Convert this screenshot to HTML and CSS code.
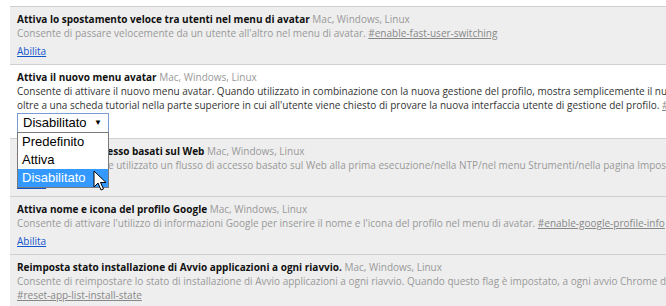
FILE: index.html
```html
<!DOCTYPE html>
<html>
<head>
<title>Flag sperimentali</title>
<meta name=viewport content="width=device-width, initial-scale=1">
<link rel="stylesheet" href="styles.css">
</head>
<body>
<div class="flags">
  <div class="exp off">
    <div class="exp-title"><b>Attiva lo spostamento veloce tra utenti nel menu di avatar</b> <span class="plat">Mac, Windows, Linux</span></div>
    <div class="exp-desc">Consente di passare velocemente da un utente all'altro nel menu di avatar. <a class="perma" href="#">#enable-fast-user-switching</a></div>
    <div class="exp-act"><a class="act" href="#">Abilita</a></div>
  </div>
  <div class="exp on">
    <div class="exp-title"><b>Attiva il nuovo menu avatar</b> <span class="plat">Mac, Windows, Linux</span></div>
    <div class="exp-desc">Consente di attivare il nuovo menu avatar. Quando utilizzato in combinazione con la nuova gestione del profilo, mostra semplicemente il nuovo menu avatar del profilo,<br>oltre a una scheda tutorial nella parte superiore in cui all'utente viene chiesto di provare la nuova interfaccia utente di gestione del profilo. <a class="perma" href="#">#enable-new-avatar-menu</a></div>
    <div class="combo">
      <div class="combo-box"><span>Disabilitato</span><span class="arrow">&#9660;</span></div>
      <div class="combo-list">
        <div class="opt">Predefinito</div>
        <div class="opt">Attiva</div>
        <div class="opt sel">Disabilitato</div>
      </div>
      <svg class="cursor" width="14" height="22" viewBox="0 0 14 22">
        <path d="M1 1 L1 17 L5 13 L8 20 L10.5 19 L7.5 12.5 L13 12.5 Z" fill="#fff" stroke="#000" stroke-width="1" stroke-linejoin="round"/>
      </svg>
    </div>
  </div>
  <div class="exp off">
    <div class="exp-title"><b>Attiva flussi di accesso basati sul Web</b> <span class="plat">Mac, Windows, Linux</span></div>
    <div class="exp-desc">Quando attivo, viene utilizzato un flusso di accesso basato sul Web alla prima esecuzione/nella NTP/nel menu Strumenti/nella pagina Impostazioni. <a class="perma" href="#">#enable-web-based-signin</a></div>
    <div class="exp-act"><a class="act" href="#">Abilita</a></div>
  </div>
  <div class="exp off">
    <div class="exp-title"><b>Attiva nome e icona del profilo Google</b> <span class="plat">Mac, Windows, Linux</span></div>
    <div class="exp-desc">Consente di attivare l'utilizzo di informazioni Google per inserire il nome e l'icona del profilo nel menu di avatar. <a class="perma" href="#">#enable-google-profile-info</a></div>
    <div class="exp-act"><a class="act" href="#">Abilita</a></div>
  </div>
  <div class="exp off">
    <div class="exp-title"><b>Reimposta stato installazione di Avvio applicazioni a ogni riavvio.</b> <span class="plat">Mac, Windows, Linux</span></div>
    <div class="exp-desc">Consente di reimpostare lo stato di installazione di Avvio applicazioni a ogni riavvio. Quando questo flag è impostato, a ogni avvio Chrome dimenticherà che Avvio applicazioni è stato installato.<br><a class="perma" href="#">#reset-app-list-install-state</a></div>
  </div>
</div>
</body>
</html>
```

FILE: styles.css
```css
html, body {
    margin: 0;
    overflow: hidden;
    background: #fff;
}
body {
    font-family: "Open Sans", "Noto Sans", sans-serif;
    font-size: 10px;
    color: #000;
}
.flags {
    margin: 6px 0 0 10px;
    width: 1000px;
    border-top: 1px solid #d0d0d0;
}
.exp {
    padding: 5px 7px 6px;
    border-bottom: 1px solid #d0d0d0;
    line-height: 14px;
    white-space: nowrap;
}
.exp.off {
    background: #eee;
    height: 46px;
}
.exp.on {
    background: #fff;
    padding-bottom: 5px;
}
.exp b {
    font-weight: bold;
    color: #111;
}
.plat {
    color: #999;
}
.off .exp-desc {
    color: #999;
}
.on .exp-desc {
    color: #333;
}
.perma {
    color: #888;
}
.exp-act {
    margin-top: 4px;
}
.act {
    color: #15c;
}
.combo {
    position: relative;
    margin-top: 1px;
    font-family: "Liberation Sans", Arial, sans-serif;
    font-size: 13px;
}
.combo-box {
    display: flex;
    align-items: center;
    justify-content: space-between;
    width: 79px;
    height: 18px;
    padding: 0 6px 0 5px;
    border: 1px solid #7a9cd3;
    background: #fff;
    color: #000;
    line-height: 18px;
}
.arrow {
    font-size: 8px;
}
.combo-list {
    position: absolute;
    left: 0;
    top: 19px;
    width: 90px;
    border: 1px solid #7a7a7a;
    background: #fff;
    z-index: 2;
    line-height: 18px;
}
.opt {
    padding: 0 4px;
    height: 18px;
}
.opt.sel {
    background: #3399ff;
    color: #fff;
}
.cursor {
    position: absolute;
    left: 76px;
    top: 57px;
    z-index: 3;
}
```
